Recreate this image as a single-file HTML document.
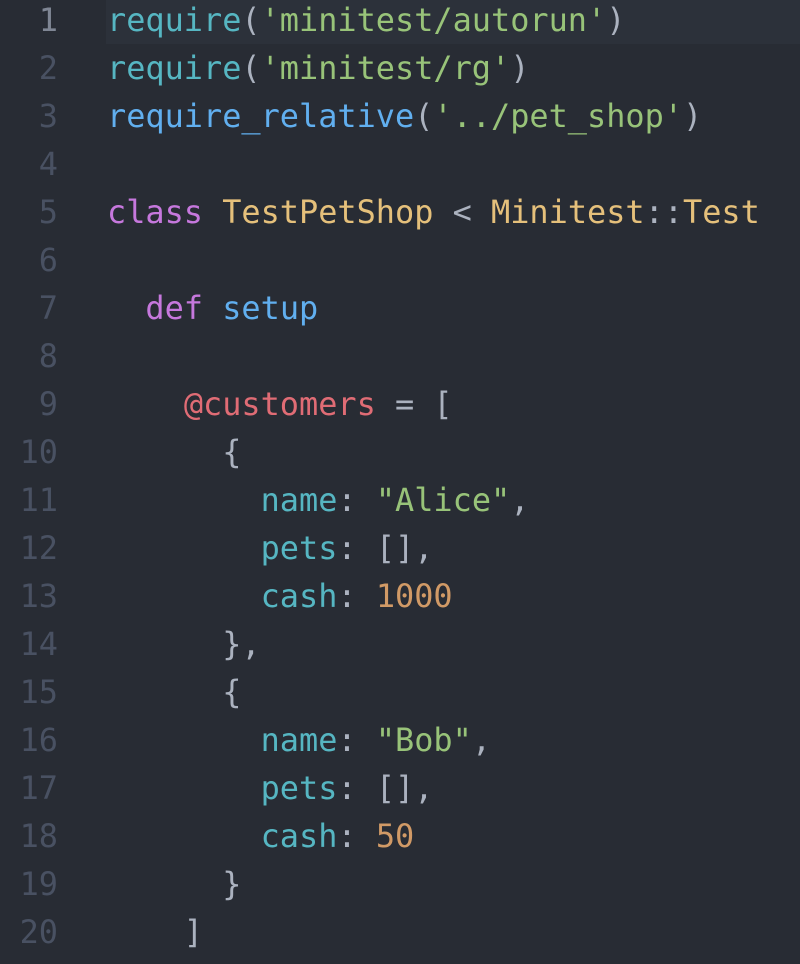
<!DOCTYPE html><html><head><style>
body{margin:0;background:#282c34;width:800px;height:964px;overflow:hidden;font-family:"DejaVu Sans Mono","Liberation Mono",monospace;font-size:31.9px;color:#abb2bf}
.l{position:relative;height:48px;line-height:48px;white-space:pre}
.n{position:absolute;left:0;width:58px;text-align:right;color:#495162}
.c{position:absolute;left:107px}
.hl{position:absolute;left:106px;top:0;width:694px;height:44px;background:#2c313a}
.a{color:#56b6c2}.b{color:#61afef}.s{color:#98c379}.k{color:#c678dd}.y{color:#e5c07b}.r{color:#e06c75}.o{color:#d19a66}
#w{position:absolute;top:-4px;left:0;width:800px}
</style></head><body>
<div class="hl"></div>
<div id="w">
<div class="l"><span class="n" style="color:#7f8694">1</span><span class="c"><span class="a">require</span>(<span class="s">'minitest/autorun'</span>)</span></div>
<div class="l"><span class="n">2</span><span class="c"><span class="a">require</span>(<span class="s">'minitest/rg'</span>)</span></div>
<div class="l"><span class="n">3</span><span class="c"><span class="b">require_relative</span>(<span class="s">'../pet_shop'</span>)</span></div>
<div class="l"><span class="n">4</span></div>
<div class="l"><span class="n">5</span><span class="c"><span class="k">class</span> <span class="y">TestPetShop</span> &lt; <span class="y">Minitest</span>::<span class="y">Test</span></span></div>
<div class="l"><span class="n">6</span></div>
<div class="l"><span class="n">7</span><span class="c">  <span class="k">def</span> <span class="b">setup</span></span></div>
<div class="l"><span class="n">8</span></div>
<div class="l"><span class="n">9</span><span class="c">    <span class="r">@customers</span> = [</span></div>
<div class="l"><span class="n">10</span><span class="c">      {</span></div>
<div class="l"><span class="n">11</span><span class="c">        <span class="a">name</span>: <span class="s">"Alice"</span>,</span></div>
<div class="l"><span class="n">12</span><span class="c">        <span class="a">pets</span>: [],</span></div>
<div class="l"><span class="n">13</span><span class="c">        <span class="a">cash</span>: <span class="o">1000</span></span></div>
<div class="l"><span class="n">14</span><span class="c">      },</span></div>
<div class="l"><span class="n">15</span><span class="c">      {</span></div>
<div class="l"><span class="n">16</span><span class="c">        <span class="a">name</span>: <span class="s">"Bob"</span>,</span></div>
<div class="l"><span class="n">17</span><span class="c">        <span class="a">pets</span>: [],</span></div>
<div class="l"><span class="n">18</span><span class="c">        <span class="a">cash</span>: <span class="o">50</span></span></div>
<div class="l"><span class="n">19</span><span class="c">      }</span></div>
<div class="l"><span class="n">20</span><span class="c">    ]</span></div>
</div>
</body></html>
